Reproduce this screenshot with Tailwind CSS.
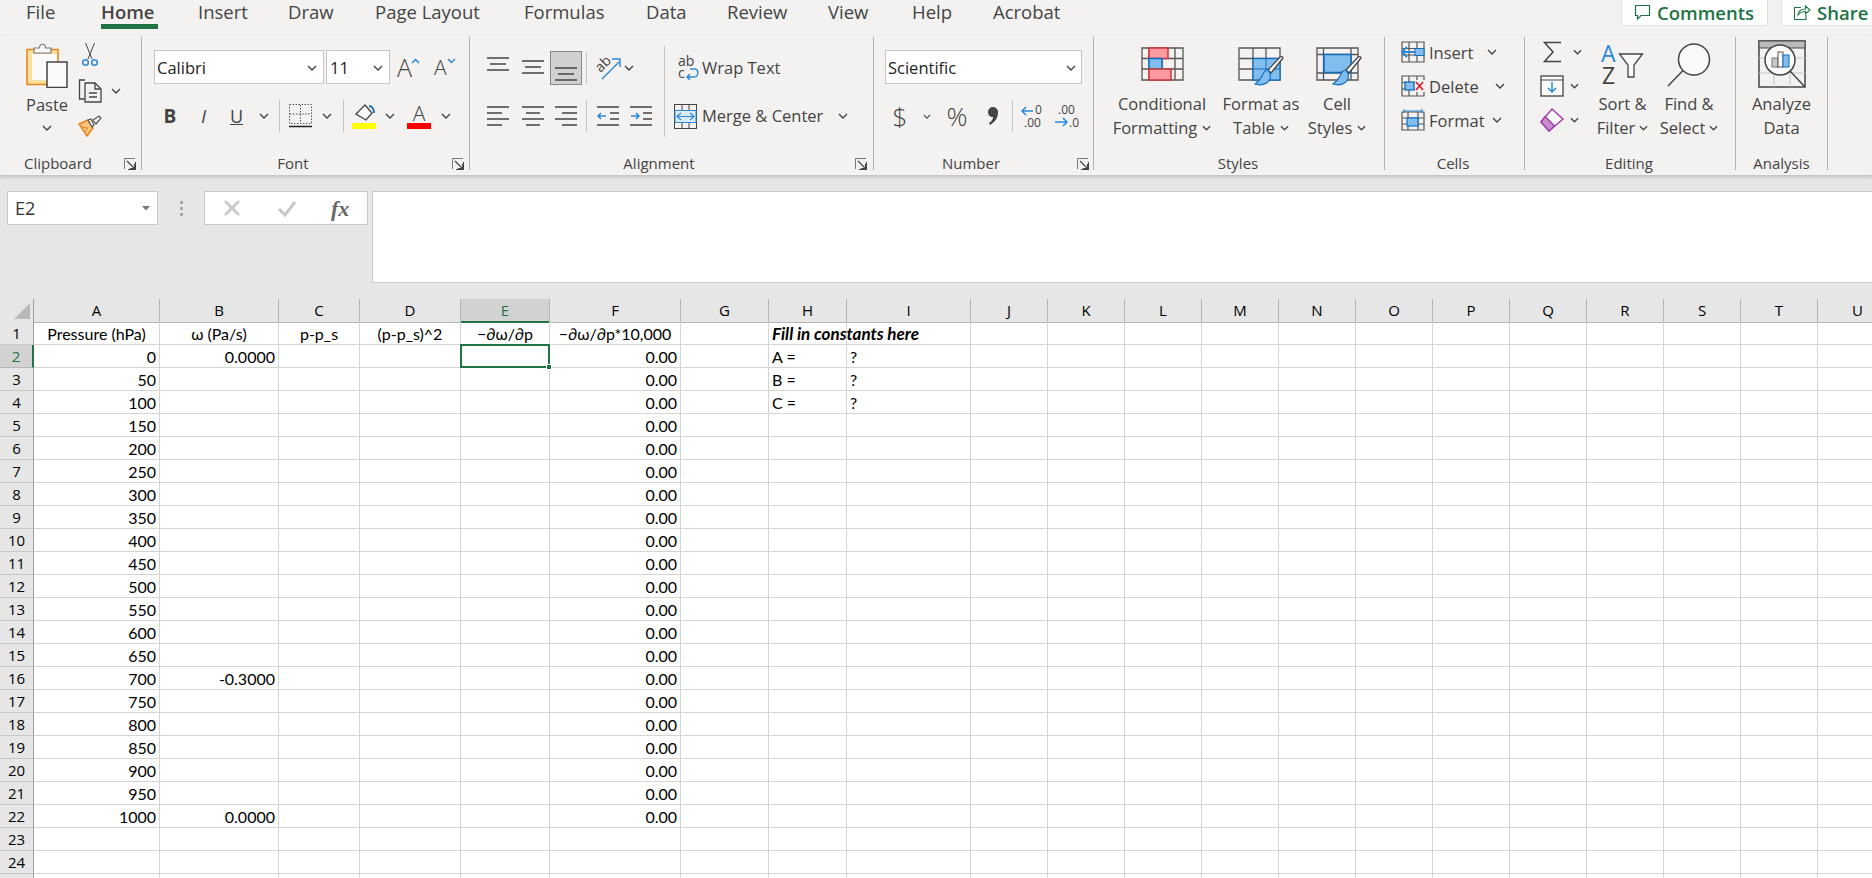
<!DOCTYPE html>
<html lang="en">
<head>
<meta charset="UTF-8">
<title>Excel - Home</title>
<script src="https://cdn.jsdelivr.net/npm/@tailwindcss/browser@4"></script>
</head>
<body class="w-screen h-screen overflow-hidden bg-[#e6e6e6] font-['Open_Sans',sans-serif] text-[#444]">

<svg class="hidden">
  <symbol id="chev" viewBox="0 0 10 6"><path d="M1 1l4 4 4-4" fill="none" stroke="#444" stroke-width="1.4"/></symbol>
  <symbol id="launch" viewBox="0 0 12 12"><path d="M.5 11V.5H11" fill="none" stroke="#777"/><path d="M11.5 4v7.5H4M3 3l7.5 7.5M10.5 6v4.5H6" fill="none" stroke="#444" stroke-width="1.2"/></symbol>
  <symbol id="valign" viewBox="0 0 22 14"><path d="M0 1h22M3 7h16M0 13h22" stroke="#444" stroke-width="1.3"/></symbol>
</svg>

<!-- tabs -->
<div class="flex h-[36px] bg-[#f3f2f1] text-[18.5px] leading-[24px] text-[#444]">
  <div class="flex pl-[26px]">
    <span class="w-[75px]">File</span>
    <div class="w-[97px]"><span class="block w-[57px] font-semibold border-b-[5px] border-[#217346] h-[29px]">Home</span></div>
    <span class="w-[90px]">Insert</span>
    <span class="w-[87px]">Draw</span>
    <span class="w-[149px]">Page Layout</span>
    <span class="w-[122px]">Formulas</span>
    <span class="w-[81px]">Data</span>
    <span class="w-[101px]">Review</span>
    <span class="w-[84px]">View</span>
    <span class="w-[81px]">Help</span>
    <span>Acrobat</span>
  </div>
  <div class="ml-auto flex gap-[13px] h-[26px] text-[#217346] font-semibold">
    <div class="w-[147px] bg-white border border-t-0 border-[#e1dfdd] rounded-b-[3px] flex items-center pl-[12px] gap-[6px]">
      <svg width="17" height="17" viewBox="0 0 17 17"><path d="M1.500 1.500h14v10H7L3.500 15v-3.500h-2z" fill="none" stroke="#217346" stroke-width="1.200"/></svg>
      <span>Comments</span>
    </div>
    <div class="w-[91px] bg-white border border-t-0 border-r-0 border-[#e1dfdd] rounded-bl-[3px] flex items-center pl-[11px] gap-[6px]">
      <svg width="18" height="17" viewBox="0 0 18 17"><path d="M8 3.500H1.500v12H13V11" fill="none" stroke="#217346" stroke-width="1.100"/><path d="M5 11c.5-4 3.500-6 7.500-6V2L17 6l-4.500 4V7.500C9 7.500 7 8.500 5 11z" fill="none" stroke="#217346" stroke-width="1.100"/></svg>
      <span>Share</span>
    </div>
  </div>
</div>

<!-- ribbon -->
<div class="flex h-[139px] bg-[#f3f2f1] shadow-[0_2px_4px_rgba(0,0,0,0.18)] relative text-[16.5px] leading-[24px]">

  <!-- clipboard -->
  <div class="flex flex-col w-[142px] h-[133px] mt-px border-r border-[#b3b0ad]">
    <div class="flex flex-1 pl-[26px]">
      <div class="w-[42px] flex flex-col items-center">
        <svg class="mt-[5px]" width="42" height="46" viewBox="0 0 42 46">
          <rect x="1" y="7.500" width="31" height="35" fill="#fbdf9c" stroke="#e8821e" stroke-width="1.500"/>
          <rect x="6" y="12" width="25" height="26" fill="#fafafa"/>
          <path d="M8 11V6h5.500c0-5 6-5 6 0H25v5z" fill="#fafafa" stroke="#777" stroke-width="1.200"/>
          <rect x="21" y="20" width="20" height="25.500" fill="#fafafa" stroke="#444" stroke-width="1.500"/>
        </svg>
        <span class="mt-[7px] h-[20px] leading-[20px]">Paste</span>
        <svg class="mt-[10px]" width="10" height="6"><use href="#chev"/></svg>
      </div>
      <div class="ml-[10px] flex flex-col">
        <svg class="mt-[6px] ml-[4px]" width="16" height="24" viewBox="0 0 16 24">
          <path d="M3.500 0l6.500 16M12.500 0L6 16" stroke="#444" fill="none"/>
          <circle cx="3.500" cy="19.500" r="2.800" fill="none" stroke="#2b88d8" stroke-width="1.500"/>
          <circle cx="12.500" cy="19.500" r="2.800" fill="none" stroke="#2b88d8" stroke-width="1.500"/>
        </svg>
        <div class="mt-[12px] flex items-center">
          <svg width="24" height="24" viewBox="0 0 24 24" fill="none" stroke="#444" stroke-width="1.300">
            <path d="M7 1H1.500v19H7"/><path d="M7 4h10l6 6v13H7z" fill="#f3f2f1"/><path d="M17 4v6h6M11 14h8M11 18h8"/>
          </svg>
          <svg class="ml-[9px]" width="10" height="6"><use href="#chev"/></svg>
        </div>
        <svg class="mt-[12px]" width="24" height="22" viewBox="0 0 24 22">
          <path d="M1 9l9-4 5 8-6 8z" fill="#f8c67c" stroke="#e8821e" stroke-width="1.500"/>
          <path d="M4 12l6 1M7 16l3-3" stroke="#e8821e"/>
          <path d="M10 5l3-1 3 6-2 2zM15 5l6-4 2 2-5 6z" fill="#f3f2f1" stroke="#555" stroke-width="1.200"/>
        </svg>
      </div>
    </div>
    <div class="relative h-[14px] leading-[14px] text-[15px] w-[116px] text-center">Clipboard
      <svg class="absolute left-[124px] top-[2px]" width="12" height="12"><use href="#launch"/></svg>
    </div>
  </div>

  <!-- font -->
  <div class="flex flex-col w-[328px] h-[133px] mt-px border-r border-[#b3b0ad]">
    <div class="flex-1 pl-[12px]">
      <div class="flex mt-[13px] h-[34px] items-center">
        <div class="w-[170px] h-[34px] bg-white border border-[#c8c6c4] flex items-center justify-between pl-[2px] pr-[6px] pt-px text-[#222]">Calibri <svg width="10" height="6"><use href="#chev"/></svg></div>
        <div class="ml-[2px] w-[64px] h-[34px] bg-white border border-[#c8c6c4] flex items-center justify-between pl-[3px] pr-[6px] pt-px text-[#222]">11 <svg width="10" height="6"><use href="#chev"/></svg></div>
        <div class="ml-[7px] w-[24px] text-[25px] font-light leading-[30px] flex">A<svg class="mt-[6px] -ml-[1px]" width="9" height="6" viewBox="0 0 9 6"><path d="M1 5l3.500-3.500L8 5" fill="none" stroke="#2b88d8" stroke-width="1.500"/></svg></div>
        <div class="ml-[13px] w-[22px] text-[21px] font-light leading-[30px] flex">A<svg class="mt-[6px]" width="9" height="6" viewBox="0 0 9 6"><path d="M1 1l3.500 3.500L8 1" fill="none" stroke="#2b88d8" stroke-width="1.500"/></svg></div>
      </div>
      <div class="flex mt-[16px] h-[32px] items-center text-[17px]">
        <span class="w-[32px] text-center font-bold text-[19px]">B</span>
        <span class="w-[35px] text-center italic text-[19px]">I</span>
        <span class="w-[31px] text-center underline text-[18px]">U</span>
        <div class="w-[24px] flex justify-center"><svg width="10" height="6"><use href="#chev"/></svg></div>
        <div class="w-[5px]"><div class="w-px h-[32px] bg-[#c8c6c4] ml-[3px]"></div></div>
        <div class="w-[39px] flex justify-center">
          <svg width="23" height="24" viewBox="0 0 23 24"><path d="M.5.500h22v19H.500zM11.500 1v18M1 10h21" fill="none" stroke="#555" stroke-dasharray="1.500 1.500"/><path d="M0 22.500h23" stroke="#222" stroke-width="1.500"/></svg>
        </div>
        <div class="w-[14px] flex justify-center"><svg width="10" height="6"><use href="#chev"/></svg></div>
        <div class="w-[10px]"><div class="w-px h-[32px] bg-[#c8c6c4] ml-[9px]"></div></div>
        <div class="w-[39px] flex justify-center">
          <svg width="24" height="26" viewBox="0 0 24 26"><path d="M4 11l9-9 7 8-6 7z" fill="#fafafa" stroke="#444" stroke-width="1.300"/><path d="M17 3c3 0 5 3 5 7" fill="none" stroke="#1f6fb5" stroke-width="2"/><rect y="20" width="24" height="6" fill="#ffff00"/></svg>
        </div>
        <div class="w-[14px] flex justify-center"><svg width="10" height="6"><use href="#chev"/></svg></div>
        <div class="w-[44px] flex flex-col items-center leading-[20px] text-[21px]"><span class="h-[20px] font-light">A</span><div class="w-[24px] h-[6px] bg-[#ff0000]"></div></div>
        <div class="w-[10px] flex justify-center"><svg width="10" height="6"><use href="#chev"/></svg></div>
      </div>
    </div>
    <div class="relative h-[14px] leading-[14px] text-[15px] w-[302px] text-center">Font
      <svg class="absolute left-[310px] top-[2px]" width="12" height="12"><use href="#launch"/></svg>
    </div>
  </div>

  <!-- alignment -->
  <div class="flex flex-col w-[404px] h-[133px] mt-px border-r border-[#b3b0ad]">
    <div class="flex flex-1 pl-[11px]">
      <div class="w-[184px] h-[91px] mt-[9px] border-r border-[#c8c6c4] flex flex-col">
        <div class="flex h-[34px] mt-[5px] items-center">
          <div class="w-[34px] flex justify-center -mt-[9px]"><svg width="22" height="14"><use href="#valign"/></svg></div>
          <div class="w-[35px] flex justify-center -mt-[2px]"><svg width="22" height="14"><use href="#valign"/></svg></div>
          <div class="w-[32px] h-[34px] bg-[#d2d0ce] border border-[#8a8886] flex justify-center items-end pb-[3px]"><svg width="22" height="14"><use href="#valign"/></svg></div>
          <div class="w-px h-[32px] bg-[#c8c6c4] ml-[4px]"></div>
          <svg class="ml-[8px] overflow-visible" width="26" height="26" viewBox="0 0 26 26">
            <text x="1" y="15" transform="rotate(-45 7 11)" font-size="14" fill="#444" font-family="Open Sans">ab</text>
            <path d="M7 24L24 7M17 4h8v8" fill="none" stroke="#2b88d8" stroke-width="1.400"/>
          </svg>
          <svg class="ml-[3px]" width="10" height="6"><use href="#chev"/></svg>
        </div>
        <div class="flex h-[32px] mt-[15px] items-center">
          <div class="w-[34px] flex justify-center"><svg width="22" height="20" viewBox="0 0 22 20" stroke="#444" stroke-width="1.300"><path d="M0 1h22M0 7h15M0 13h22M0 19h15"/></svg></div>
          <div class="w-[35px] flex justify-center"><svg width="22" height="20" viewBox="0 0 22 20" stroke="#444" stroke-width="1.300"><path d="M0 1h22M4 7h14M0 13h22M4 19h14"/></svg></div>
          <div class="w-[32px] flex justify-center"><svg width="22" height="20" viewBox="0 0 22 20" stroke="#444" stroke-width="1.300"><path d="M0 1h22M7 7h15M0 13h22M7 19h15"/></svg></div>
          <div class="w-px h-[32px] bg-[#c8c6c4] ml-[4px]"></div>
          <svg class="ml-[10px]" width="22" height="20" viewBox="0 0 22 20" fill="none"><path d="M0 1h22M13 7h9M13 13h9M0 19h22" stroke="#444" stroke-width="1.300"/><path d="M9 10H1M4 7l-3 3 3 3" stroke="#2b88d8" stroke-width="1.500"/></svg>
          <svg class="ml-[11px]" width="22" height="20" viewBox="0 0 22 20" fill="none"><path d="M0 1h22M13 7h9M13 13h9M0 19h22" stroke="#444" stroke-width="1.300"/><path d="M1 10h8M6 7l3 3-3 3" stroke="#2b88d8" stroke-width="1.500"/></svg>
        </div>
      </div>
      <div class="flex flex-col mt-[14px]">
        <div class="flex h-[34px] items-center">
          <svg class="ml-[13px] overflow-visible" width="22" height="26" viewBox="0 0 22 26">
            <text x="0" y="11" font-size="14" fill="#444" font-family="Open Sans">ab</text>
            <text x="0" y="23" font-size="14" fill="#444" font-family="Open Sans">c</text>
            <path d="M12 14h5c4 0 4 8-1 8H9M12 19l-3 3 3 3" fill="none" stroke="#2b88d8" stroke-width="1.400"/>
          </svg>
          <span class="ml-[2px]">Wrap Text</span>
        </div>
        <div class="flex h-[32px] mt-[15px] items-center">
          <svg class="ml-[9px]" width="23" height="25" viewBox="0 0 23 25" fill="none"><rect x=".5" y=".5" width="22" height="24" stroke="#444"/><path d="M0 6.500h23M0 18.500h23M8 1v5M15 1v5M8 19v5M15 19v5" stroke="#444"/><rect x="1" y="6.500" width="21" height="12" fill="#dcebf8" stroke="#2b88d8"/><path d="M3 12.500h17M7 9l-4 3.500L7 16M16 9l4 3.500-4 3.500" stroke="#2b88d8" stroke-width="1.200"/></svg>
          <span class="ml-[5px]">Merge &amp; Center</span>
          <svg class="ml-[15px]" width="10" height="6"><use href="#chev"/></svg>
        </div>
      </div>
    </div>
    <div class="relative h-[14px] leading-[14px] text-[15px] w-[378px] text-center">Alignment
      <svg class="absolute left-[385px] top-[2px]" width="12" height="12"><use href="#launch"/></svg>
    </div>
  </div>

  <!-- number -->
  <div class="flex flex-col w-[220px] h-[133px] mt-px border-r border-[#b3b0ad]">
    <div class="flex-1 pl-[11px]">
      <div class="mt-[13px] w-[197px] h-[34px] bg-white border border-[#c8c6c4] flex items-center justify-between pl-[2px] pr-[5px] pt-px text-[#222]">Scientific <svg width="10" height="6"><use href="#chev"/></svg></div>
      <div class="flex mt-[16px] h-[32px] items-center">
        <span class="w-[30px] text-center text-[26px] font-light">$</span>
        <div class="w-[24px] flex justify-center"><svg width="8" height="5"><use href="#chev"/></svg></div>
        <span class="w-[36px] text-center text-[26px] font-light">%</span>
        <div class="w-[36px] flex justify-center"><svg width="12" height="18" viewBox="0 0 12 18"><path d="M1 5a5 5 0 1 1 10 0c0 6-3 10-8 13l-1-2c3-2 4-4 4-6C3 10 1 8 1 5z" fill="#444"/></svg></div>
        <div class="w-px h-[32px] bg-[#c8c6c4] ml-[1px]"></div>
        <svg class="ml-[7px] overflow-visible" width="26" height="26" viewBox="0 0 26 26">
          <text x="15" y="11" font-size="12" fill="#444" font-family="Open Sans">0</text>
          <text x="4" y="24" font-size="12" fill="#444" font-family="Open Sans">.00</text>
          <path d="M13 8H2M6 4L2 8l4 4" fill="none" stroke="#2b88d8" stroke-width="1.500"/>
        </svg>
        <svg class="ml-[8px] overflow-visible" width="26" height="26" viewBox="0 0 26 26">
          <text x="4" y="11" font-size="12" fill="#444" font-family="Open Sans">.00</text>
          <text x="15" y="24" font-size="12" fill="#444" font-family="Open Sans">.0</text>
          <path d="M1 19h12M9 15l4 4-4 4" fill="none" stroke="#2b88d8" stroke-width="1.500"/>
        </svg>
      </div>
    </div>
    <div class="relative h-[14px] leading-[14px] text-[15px] w-[194px] text-center">Number
      <svg class="absolute left-[203px] top-[2px]" width="12" height="12"><use href="#launch"/></svg>
    </div>
  </div>

  <!-- styles -->
  <div class="flex flex-col w-[291px] h-[133px] mt-px border-r border-[#b3b0ad]">
    <div class="flex flex-1 pl-[12px] text-center">
      <div class="w-[112px] flex flex-col items-center">
        <div class="h-[45px] mt-[10px]">
          <svg width="43" height="34" viewBox="0 0 43 34" fill="none">
            <path d="M1 1h41v32H1zM1 11.500h41M1 22h41M8 1v32M21 1v32M34 1v32" stroke="#555" stroke-width="1.300"/>
            <rect x="8" y="1" width="19" height="10.500" fill="#fb9aa2" stroke="#d13438" stroke-width="1.500"/>
            <rect x="8" y="11.500" width="13" height="10.500" fill="#83bdee" stroke="#106ebe" stroke-width="1.500"/>
            <rect x="8" y="22" width="22" height="11" fill="#fb9aa2" stroke="#d13438" stroke-width="1.500"/>
          </svg>
        </div>
        <span class="h-[24px]">Conditional</span>
        <span class="h-[24px] flex items-center gap-[5px]">Formatting <svg width="9" height="6"><use href="#chev"/></svg></span>
      </div>
      <div class="w-[86px] flex flex-col items-center">
        <div class="h-[45px] mt-[10px]">
          <svg width="46" height="40" viewBox="0 0 46 40" fill="none">
            <path d="M1 1h41v32H1zM1 11.500h41M1 22h41M15 1v32M28 1v32" stroke="#555" stroke-width="1.300"/>
            <rect x="15" y="11.500" width="27" height="21.500" fill="#83bdee" stroke="#106ebe" stroke-width="1.300"/>
            <path d="M15 22h27M28 11.500V33" stroke="#106ebe"/>
            <path d="M45 11L33 26l-3-3 12-13c2-1 3 0 3 1z" fill="#fafafa" stroke="#444" stroke-width="1.300"/>
            <path d="M30 23c-3 0-5 3-6 6-1 2-3 5-7 8 6 2 13 0 15-5 1-3 0-6-2-9z" fill="#83bdee" stroke="#106ebe" stroke-width="1.200"/>
          </svg>
        </div>
        <span class="h-[24px] whitespace-nowrap">Format as</span>
        <span class="h-[24px] flex items-center gap-[5px]">Table <svg width="9" height="6"><use href="#chev"/></svg></span>
      </div>
      <div class="w-[66px] flex flex-col items-center">
        <div class="h-[45px] mt-[10px] ml-[4px]">
          <svg width="46" height="40" viewBox="0 0 46 40" fill="none">
            <path d="M1 1h41v32H1zM1 7.500h41M7.500 1v32M35 1v32M1 26h41" stroke="#555" stroke-width="1.300"/>
            <rect x="8" y="7.500" width="27" height="18" fill="#83bdee" stroke="#106ebe" stroke-width="1.500"/>
            <path d="M45 11L33 26l-3-3 12-13c2-1 3 0 3 1z" fill="#fafafa" stroke="#444" stroke-width="1.300"/>
            <path d="M30 23c-3 0-5 3-6 6-1 2-3 5-7 8 6 2 13 0 15-5 1-3 0-6-2-9z" fill="#83bdee" stroke="#106ebe" stroke-width="1.200"/>
          </svg>
        </div>
        <span class="h-[24px]">Cell</span>
        <span class="h-[24px] flex items-center gap-[5px]">Styles <svg width="9" height="6"><use href="#chev"/></svg></span>
      </div>
    </div>
    <div class="h-[14px] leading-[14px] text-[15px] w-[288px] text-center">Styles</div>
  </div>

  <!-- cells -->
  <div class="flex flex-col w-[140px] h-[133px] mt-px border-r border-[#b3b0ad]">
    <div class="flex flex-col flex-1 pl-[16px] mt-[4px] gap-[12px]">
      <div class="flex h-[22px] items-center">
        <svg width="24" height="22" viewBox="0 0 24 22" fill="none"><path d="M1 1h22v20H1zM1 7.500h22M1 14h22M8 1v20M16 1v20" stroke="#555" stroke-width="1.200"/><rect x="14" y="7.500" width="9" height="7" fill="#83bdee" stroke="#106ebe"/><path d="M14 11H1M6 6l-5 5 5 5" stroke="#2b88d8" stroke-width="1.800"/></svg>
        <span class="ml-[4px] w-[58px] pt-[2px]">Insert</span>
        <svg width="10" height="6"><use href="#chev"/></svg>
      </div>
      <div class="flex h-[22px] items-center">
        <svg width="24" height="22" viewBox="0 0 24 22" fill="none"><path d="M1 1h22v20H1zM1 7.500h22M1 14h22M8 1v20M16 1v20" stroke="#555" stroke-width="1.200"/><rect x="4" y="7" width="9" height="8" fill="#83bdee" stroke="#106ebe" stroke-width="1.300"/><rect x="14" y="5" width="10" height="12" fill="#f3f2f1"/><path d="M15 7l7 8M22 7l-7 8" stroke="#e81123" stroke-width="1.600"/></svg>
        <span class="ml-[4px] w-[66px] pt-[2px]">Delete</span>
        <svg width="10" height="6"><use href="#chev"/></svg>
      </div>
      <div class="flex h-[22px] items-center">
        <svg width="24" height="22" viewBox="0 0 24 22" fill="none"><path d="M1 3h22v18H1zM1 9h22M1 15h22M7 3v18M17 3v18" stroke="#555" stroke-width="1.200"/><rect x="6" y="9" width="11" height="8" fill="#83bdee" stroke="#106ebe" stroke-width="1.200"/><path d="M3 2h18M3 0v4M21 0v4" stroke="#2b88d8" stroke-width="1.200"/></svg>
        <span class="ml-[4px] w-[63px] pt-[2px]">Format</span>
        <svg width="10" height="6"><use href="#chev"/></svg>
      </div>
    </div>
    <div class="h-[14px] leading-[14px] text-[15px] w-[136px] text-center">Cells</div>
  </div>

  <!-- editing -->
  <div class="flex flex-col w-[211px] h-[133px] mt-px border-r border-[#b3b0ad]">
    <div class="flex flex-1 pl-[15px]">
      <div class="w-[52px] flex flex-col mt-[4px] gap-[12px]">
        <div class="flex h-[22px] items-center">
          <svg class="ml-[3px]" width="18" height="22" viewBox="0 0 18 22" fill="none"><path d="M18 1.500H1.500L10 11l-8.500 9.500H18" stroke="#444" stroke-width="1.500"/></svg>
          <svg class="ml-[12px]" width="9" height="6"><use href="#chev"/></svg>
        </div>
        <div class="flex h-[22px] items-center">
          <svg width="24" height="22" viewBox="0 0 24 22" fill="none"><rect x="1" y="1" width="22" height="20" fill="#fafafa" stroke="#444" stroke-width="1.300"/><path d="M1 5h22" stroke="#444"/><path d="M12 7v10M8 13l4 4 4-4" stroke="#2b88d8" stroke-width="1.500"/></svg>
          <svg class="ml-[6px]" width="9" height="6"><use href="#chev"/></svg>
        </div>
        <div class="flex h-[22px] items-center">
          <svg width="24" height="24" viewBox="0 0 24 24" fill="none"><path d="M12 1l11 10L9 23 1 14z" fill="#fafafa" stroke="#a23aad" stroke-width="1.400"/><path d="M5 8.500l9.500 9.500L9 23 1 14z" fill="#c88ed0" stroke="#a23aad" stroke-width="1.400"/></svg>
          <svg class="ml-[6px]" width="9" height="6"><use href="#chev"/></svg>
        </div>
      </div>
      <div class="w-[61px] flex flex-col items-center text-center">
        <div class="h-[45px] mt-[7px] mb-[3px]">
          <svg class="overflow-visible" width="44" height="44" viewBox="0 0 44 44" fill="none">
            <text x="0" y="18" font-size="23" fill="#2b88d8" font-family="Open Sans">A</text>
            <text x="1" y="40" font-size="23" fill="#444" font-family="Open Sans">Z</text>
            <path d="M18.500 10H41.500L33 21V33H27V21Z" fill="#fafafa" stroke="#444" stroke-width="1.300"/>
          </svg>
        </div>
        <span class="h-[24px] whitespace-nowrap">Sort &amp;</span>
        <span class="h-[24px] flex items-center gap-[4px]">Filter <svg width="9" height="6"><use href="#chev"/></svg></span>
      </div>
      <div class="w-[72px] flex flex-col items-center text-center">
        <div class="h-[45px] mt-[6px] mb-[4px]">
          <svg width="44" height="44" viewBox="0 0 44 44" fill="none"><circle cx="27" cy="16.500" r="15.500" fill="#fafafa" stroke="#444" stroke-width="1.500"/><path d="M16 27.500L1 43" stroke="#444" stroke-width="1.500"/></svg>
        </div>
        <span class="h-[24px] whitespace-nowrap">Find &amp;</span>
        <span class="h-[24px] flex items-center gap-[4px]">Select <svg width="9" height="6"><use href="#chev"/></svg></span>
      </div>
    </div>
    <div class="h-[14px] leading-[14px] text-[15px] w-[208px] text-center">Editing</div>
  </div>

  <!-- analysis -->
  <div class="flex flex-col w-[92px] h-[133px] mt-px border-r border-[#b3b0ad]">
    <div class="flex flex-col flex-1 items-center text-center">
      <svg class="mt-[3px] mb-[4px]" width="48" height="48" viewBox="0 0 48 48" fill="none">
        <rect x="1" y="1" width="46" height="46" fill="#f3f2f1" stroke="#444" stroke-width="1.500"/>
        <rect x="1" y="1" width="46" height="7" fill="#bdbbb9" stroke="#444"/>
        <path d="M1 18h46M1 33h46M16 8v39M32 8v39" stroke="#c8c6c4"/>
        <circle cx="22" cy="20" r="15" fill="#fafafa" stroke="#444" stroke-width="1.500"/>
        <rect x="14" y="18" width="6" height="9" fill="#c8c6c4" stroke="#777"/>
        <rect x="20" y="12" width="5" height="15" fill="#fafafa" stroke="#555"/>
        <rect x="25" y="15" width="6" height="12" fill="#83bdee" stroke="#106ebe"/>
        <path d="M32 31l15 16" stroke="#444" stroke-width="1.500"/>
      </svg>
      <span class="h-[24px]">Analyze</span>
      <span class="h-[24px]">Data</span>
    </div>
    <div class="h-[14px] leading-[14px] text-[15px] w-[91px] text-center">Analysis</div>
  </div>
</div>

<!-- formula bar -->
<div class="flex h-[124px] pt-[16px] items-start">
  <div class="ml-[7px] w-[151px] h-[34px] bg-white border border-[#c8c8c8] flex items-center justify-between pl-[7px] pr-[6px] text-[18px] text-[#333]">E2
    <svg width="9" height="5" viewBox="0 0 9 5"><path d="M0 0h8L4 4.500z" fill="#777"/></svg>
  </div>
  <div class="w-[46px] h-[34px] flex flex-col items-center justify-center gap-[3px]">
    <div class="w-[3px] h-[3px] bg-[#a6a6a6]"></div><div class="w-[3px] h-[3px] bg-[#a6a6a6]"></div><div class="w-[3px] h-[3px] bg-[#a6a6a6]"></div>
  </div>
  <div class="w-[164px] h-[34px] bg-white border border-[#c8c8c8] flex items-center">
    <svg class="ml-[18px]" width="18" height="18" viewBox="0 0 18 18"><path d="M2 2l14 14M16 2L2 16" stroke="#c8c8c8" stroke-width="2.500"/></svg>
    <svg class="ml-[36px]" width="20" height="18" viewBox="0 0 20 18"><path d="M2 10l6 6L18 3" fill="none" stroke="#c8c8c8" stroke-width="3"/></svg>
    <span class="ml-[34px] font-['Liberation_Serif',serif] italic font-bold text-[22px] text-[#666]">fx</span>
  </div>
  <div class="ml-[4px] flex-1 h-[92px] bg-white border border-[#c8c8c8] border-r-0"></div>
</div>

<!-- sheet -->
<div id="sheet" class="grid grid-cols-[34px_126px_119px_81px_101px_89px_131px_88px_78px_124px_repeat(11,77px)_80px] auto-rows-[23px] bg-white relative"></div>

<script>
  const cols = ['A','B','C','D','E','F','G','H','I','J','K','L','M','N','O','P','Q','R','S','T','U'];
  const cellBase = "h-[23px] border-r border-b border-[#d4d4d4] font-['Lato',sans-serif] text-[16px] leading-[23px] text-black whitespace-nowrap px-[3px] ";
  const hdrBase = "flex items-center justify-center border-r border-[#b5b5b5] text-[15px] ";

  // contents that are not just the pressure column
  const cells = {
    A1: 'Pressure (hPa)', B1: 'ω (Pa/s)', C1: 'p-p_s', D1: '(p-p_s)^2', E1: '−∂ω/∂p', F1: '−∂ω/∂p*10,000',
    B2: '0.0000', B16: '-0.3000', B22: '0.0000',
    H2: 'A =', H3: 'B =', H4: 'C =', I2: '?', I3: '?', I4: '?'
  };
  for (let r = 2; r <= 22; r++) {
    cells['A' + r] = String((r - 2) * 50);
    cells['F' + r] = '0.00';
  }

  let html = '<div class="h-[24px] bg-[#e6e6e6] border-r border-b border-[#9e9e9e] flex items-end justify-end"><svg class="mr-[3px] mb-[3px]" width="16" height="16" viewBox="0 0 16 16"><path d="M16 0v16H0z" fill="#b8b8b8"/></svg></div>';
  for (const c of cols) {
    html += c === 'E'
      ? '<div class="h-[24px] bg-[#d2d2d2] border-b-2 border-r border-b-[#217346] border-r-[#b5b5b5] flex items-center justify-center text-[15px] text-[#217346]">' + c + '</div>'
      : '<div class="h-[24px] bg-[#e6e6e6] border-b border-[#9e9e9e] ' + hdrBase + 'text-black">' + c + '</div>';
  }
  for (let r = 1; r <= 25; r++) {
    html += r === 2
      ? '<div class="h-[23px] bg-[#d2d2d2] border-r-2 border-b border-r-[#217346] border-b-[#b5b5b5] flex items-center justify-center text-[15px] text-[#217346]">' + r + '</div>'
      : '<div class="h-[23px] bg-[#e6e6e6] border-r border-b border-[#9e9e9e] border-b-[#c8c8c8] flex items-center justify-center text-[15px] text-black">' + r + '</div>';
    for (const c of cols) {
      const id = c + r;
      const v = cells[id] || '';
      let cls = cellBase;
      if (r === 1 && 'ABCDEF'.includes(c)) cls += 'text-center ';
      else if (c === 'A' || c === 'B' || c === 'F') cls += 'text-right ';
      if (id === 'E2') {
        html += '<div class="' + cls + 'relative"><div class="absolute -left-px -top-px w-[90px] h-[24px] border-2 border-[#217346]"></div><div class="absolute -right-[3px] -bottom-[3px] w-[6px] h-[6px] bg-[#217346] border border-white"></div></div>';
      } else if (id === 'H1') {
        html += '<div class="' + cls + 'font-bold italic text-[17px]">Fill in constants here</div>';
      } else {
        html += '<div class="' + cls + '">' + v + '</div>';
      }
    }
  }
  document.getElementById('sheet').innerHTML = html;
</script>
</body>
</html>
